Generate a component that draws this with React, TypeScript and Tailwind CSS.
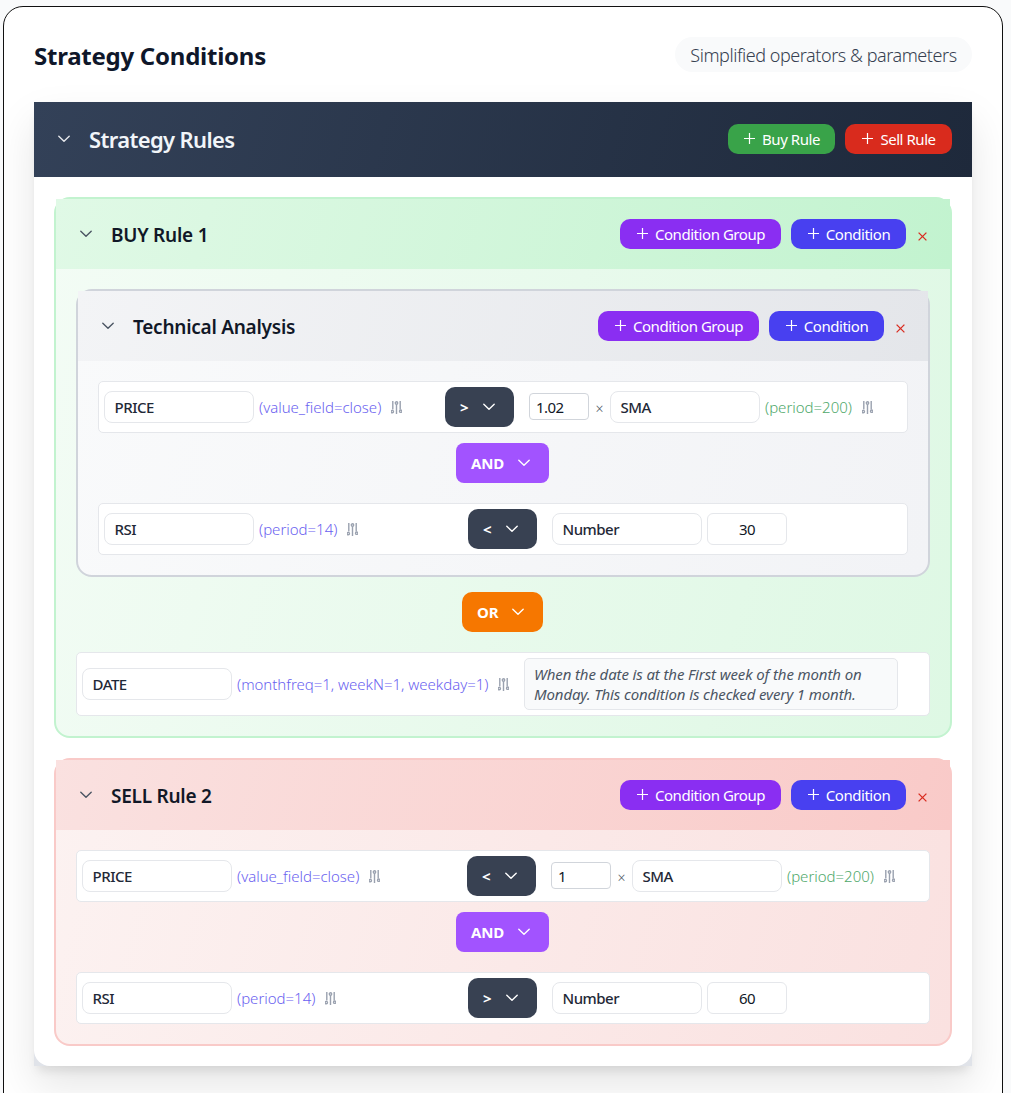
import { ReactNode } from "react";
import clsx from "clsx";

const ChevronIcon = ({ className }: { className?: string }) => (
	<svg width="14" height="8" viewBox="0 0 14 8" fill="none" stroke="currentColor" strokeWidth="1.4" strokeLinecap="round" strokeLinejoin="round" className={className}>
		<path d="M1.8 1.3 7 6.3l5.2-5" />
	</svg>
);

const PlusIcon = () => (
	<svg width="12" height="12" viewBox="0 0 12 12" fill="none" stroke="currentColor" strokeWidth="1.2" className="mb-[2px]">
		<path d="M6.5 1v11M1 6.5h11" />
	</svg>
);

const CrossIcon = ({ className }: { className?: string }) => (
	<svg width="9" height="9" viewBox="0 0 9 9" fill="none" stroke="currentColor" strokeWidth="1.3" className={className}>
		<path d="m.6.6 7.8 7.8M8.4.6.6 8.4" />
	</svg>
);

const SlidersIcon = () => (
	<svg width="11" height="13" viewBox="0 0 11 13" fill="none" stroke="currentColor" strokeWidth="1.4" className="ml-[10px] text-[#9aa1af]">
		<path d="M1.8 0v8.5M5.5 3.5V13M9.2 0v8.5" />
		<circle cx="1.3" cy="10.6" r="1.2" />
		<circle cx="5.5" cy="2" r="1.2" />
		<circle cx="9.7" cy="10.2" r="1.2" />
	</svg>
);

const ActionButton = ({ text, sx }: { text: string; sx: string }) => (
	<button className={clsx("flex h-[30px] items-center justify-center gap-[7px] rounded-[10px] text-[15px] tracking-[-0.45px] whitespace-nowrap text-white", sx)}>
		<PlusIcon />
		<span>{text}</span>
	</button>
);

const ConditionActions = () => (
	<div className="flex items-center">
		<ActionButton text="Condition Group" sx="w-[161px] bg-[#8a2ef2]" />
		<ActionButton text="Condition" sx="ml-[10px] w-[115px] bg-[#4840f0]" />
		<CrossIcon className="mt-[5px] mr-[23px] ml-[12px] text-[#d92c20]" />
	</div>
);

const BlockHeader = ({ title, sx }: { title: string; sx: string }) => (
	<div className={clsx("flex h-[70px] items-center justify-between bg-linear-105 pl-[23px]", sx)}>
		<div className="flex items-center gap-[18px]">
			<ChevronIcon className="text-[#4b5563]" />
			<h3 className="pt-[2px] text-[19px] font-semibold tracking-[-0.25px] text-[#111827]">{title}</h3>
		</div>
		<ConditionActions />
	</div>
);

const Field = ({ text }: { text: string }) => (
	<div className="flex h-8 w-[150px] shrink-0 items-center rounded-lg border border-[#e5e7eb] bg-white pl-[9.5px] text-[15px] font-medium tracking-[-0.5px] text-[#1f2937]">{text}</div>
);

const Params = ({ text, sx = "text-[#6a5ff0]" }: { text: string; sx?: string }) => (
	<>
		<span className={clsx("ml-[5px] text-[15px] font-light tracking-[-0.02px] whitespace-nowrap", sx)}>{text}</span>
		<SlidersIcon />
	</>
);

const Operator = ({ text }: { text: string }) => (
	<button className="mr-[15px] flex h-10 w-[69px] shrink-0 items-center justify-between rounded-[10px] bg-[#384152] pr-[18px] pl-[15px] text-[15px] font-bold text-white">
		<span>{text}</span>
		<ChevronIcon />
	</button>
);

const Joiner = ({ text, sx }: { text: string; sx: string }) => (
	<button className={clsx("flex h-10 items-center justify-between pr-[18px] pl-[15px] text-[15px] font-bold tracking-[-0.2px] text-white", sx)}>
		<span>{text}</span>
		<ChevronIcon />
	</button>
);

const Row = ({ children, sx = "h-[52px]" }: { children: ReactNode; sx?: string }) => (
	<div className={clsx("flex items-center rounded-[5px] border border-[#e5e7eb] bg-white px-[5px]", sx)}>{children}</div>
);

const MultipliedSma = ({ factor }: { factor: string }) => (
	<>
		<div className="mb-px flex h-[27px] w-[60px] shrink-0 items-center rounded-[4px] border border-[#d1d5db] pt-px pl-[6px] text-[15px] tracking-[-0.6px] text-[#111827]">{factor}</div>
		<span className="w-[21px] pt-[2px] text-center text-[14px] font-light text-[#4b5563]">×</span>
		<Field text="SMA" />
		<Params text="(period=200)" sx="text-[#4fa86b]" />
	</>
);

const NumberValue = ({ value }: { value: string }) => (
	<>
		<Field text="Number" />
		<div className="ml-[5px] flex h-8 w-20 items-center justify-center rounded-md border border-[#e5e7eb] text-[15px] tracking-[-0.6px] text-[#111827]">{value}</div>
	</>
);

const App = () => {
	return (
		<div className="h-[1093px] w-full overflow-hidden bg-[#f9fafb] pt-[6px] pr-2 pl-[3px] font-['Noto_Sans',sans-serif]">
			<div className="h-[1200px] rounded-[20px] border border-[#111111] bg-white px-[30px] pt-[30px]">
				<div className="flex h-[35px] items-center justify-between">
					<h1 className="pt-[2px] text-2xl font-bold tracking-[-0.25px] text-[#0f172a]">Strategy Conditions</h1>
					<div className="flex h-[35px] w-[297px] items-center justify-center rounded-full bg-[#f9fafb] pt-px text-lg font-light tracking-[-0.45px] whitespace-nowrap text-[#374151]">Simplified operators &amp; parameters</div>
				</div>

				<div className="mt-[30px] bg-[#e0e3e9] shadow-[0_20px_40px_rgba(0,0,0,0.1),0_8px_10px_-4px_rgba(0,0,0,0.1)]">
					<div className="h-[964px] rounded-b-[16px] bg-white">
						<div className="flex h-[75px] items-center justify-between bg-linear-105 from-[#334158] to-[#1e293b] px-5">
							<div className="flex items-center gap-[18px] pl-[3px]">
								<ChevronIcon className="mb-px text-[#e5e7eb]" />
								<h2 className="text-[22px] font-semibold tracking-[-0.65px] text-[#f1f5f9]">Strategy Rules</h2>
							</div>
							<div className="mb-px flex gap-[10px]">
								<ActionButton text="Buy Rule" sx="w-[107px] bg-[#39a349]" />
								<ActionButton text="Sell Rule" sx="w-[107px] bg-[#d92b1d]" />
							</div>
						</div>

						<div className="flex flex-col gap-5 p-5">
							<div className="rounded-[16px] border-2 border-[#c2f3cf] bg-linear-105 from-[#f3fcf5] to-[#def8e4]">
								<BlockHeader title="BUY Rule 1" sx="from-[#e0f9e6] to-[#c2f3cf]" />
								<div className="p-5">
									<div className="rounded-[16px] border-2 border-[#d0d4db] bg-linear-105 from-[#f9fafb] to-[#f2f3f6]">
										<BlockHeader title="Technical Analysis" sx="from-[#f3f4f6] to-[#e4e6ea]" />
										<div className="p-5">
											<Row>
												<div className="flex w-[341px] items-center">
													<Field text="PRICE" />
													<Params text="(value_field=close)" />
												</div>
												<Operator text=">" />
												<MultipliedSma factor="1.02" />
											</Row>
											<div className="flex justify-center pt-[10px] pr-px pb-5">
												<Joiner text="AND" sx="w-[93px] rounded-lg bg-[#a253ff]" />
											</div>
											<Row>
												<div className="flex w-[364px] items-center">
													<Field text="RSI" />
													<Params text="(period=14)" />
												</div>
												<Operator text="<" />
												<NumberValue value="30" />
											</Row>
										</div>
									</div>
									<div className="flex justify-center pt-[15px] pr-px pb-5">
										<Joiner text="OR" sx="w-[81px] rounded-[10px] bg-[#f67700]" />
									</div>
									<Row sx="h-[64px]">
										<div className="flex w-[442px] items-center">
											<Field text="DATE" />
											<Params text="(monthfreq=1, weekN=1, weekday=1)" />
										</div>
										<p className="h-[52px] w-[374px] rounded-[5px] border border-[#e5e7eb] bg-[#f9fafb] px-[9px] pt-[5px] text-[15px] leading-5 tracking-[-0.12px] whitespace-nowrap text-[#4b5563] italic">
											When the date is at the First week of the month on
											<br />
											Monday. This condition is checked every 1 month.
										</p>
									</Row>
								</div>
							</div>

							<div className="rounded-[16px] border-2 border-[#f9cac8] bg-linear-105 from-[#fcf2f1] to-[#fae1e0]">
								<BlockHeader title="SELL Rule 2" sx="from-[#fae1e0] to-[#f9cac8]" />
								<div className="p-5">
									<Row>
										<div className="flex w-[385px] items-center">
											<Field text="PRICE" />
											<Params text="(value_field=close)" />
										</div>
										<Operator text="<" />
										<MultipliedSma factor="1" />
									</Row>
									<div className="flex justify-center pt-[10px] pr-px pb-5">
										<Joiner text="AND" sx="w-[93px] rounded-lg bg-[#a253ff]" />
									</div>
									<Row>
										<div className="flex w-[386px] items-center">
											<Field text="RSI" />
											<Params text="(period=14)" />
										</div>
										<Operator text=">" />
										<NumberValue value="60" />
									</Row>
								</div>
							</div>
						</div>
					</div>
				</div>
			</div>
		</div>
	);
};

export default App;
